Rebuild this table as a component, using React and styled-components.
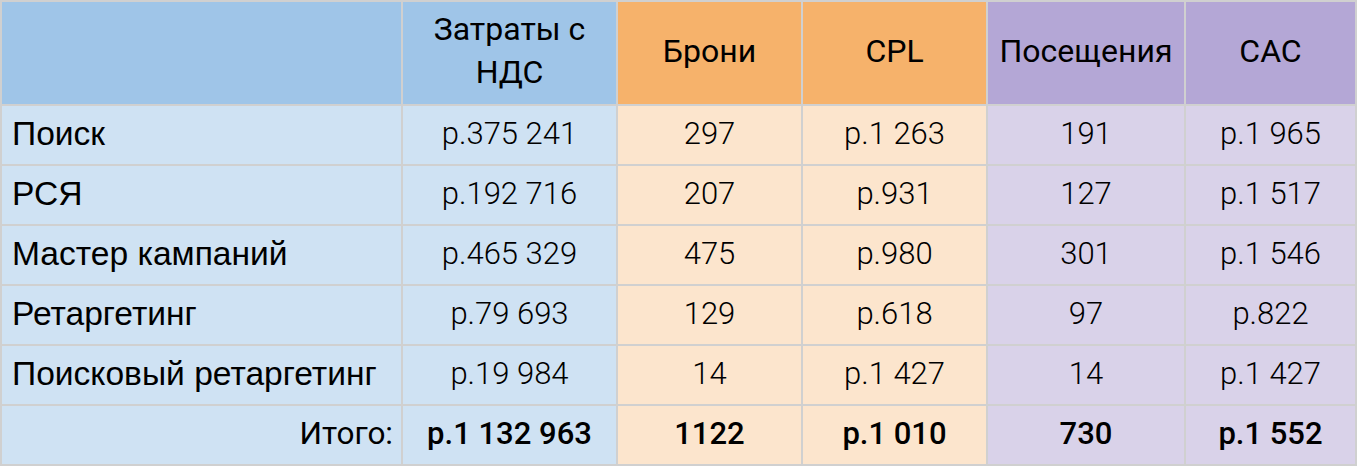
import React from "react";
import styled, { createGlobalStyle } from "styled-components";

const Global = createGlobalStyle`
  html, body { margin: 0; padding: 0; background: #ffffff; }
  body { font-family: "Roboto", "Liberation Sans", sans-serif; color: #000; }
`;

const palette = {
  blue: { head: "#9fc5e8", body: "#cfe2f3" },
  orange: { head: "#f6b26b", body: "#fce5cd" },
  purple: { head: "#b4a7d6", body: "#d9d2e9" },
};

const Table = styled.div`
  display: grid;
  grid-template-columns: 401px 215px 185px 185px 198px 171px;
  grid-template-rows: 104px repeat(6, 60px);
  width: max-content;
  border-left: 2px solid #d0d0d0;
  border-top: 2px solid #d0d0d0;
`;

const Cell = styled.div`
  box-sizing: border-box;
  display: flex;
  align-items: center;
  justify-content: center;
  text-align: center;
  padding-bottom: 4px;
  background: ${(p) => palette[p.$tone].body};
  border-right: 2px solid #d0d0d0;
  border-bottom: 2px solid #d0d0d0;
  font-family: "Roboto", sans-serif;
  font-size: 31px;
  font-weight: 300;
  line-height: 43px;
  white-space: nowrap;
  overflow: hidden;
`;

const HeadCell = styled(Cell)`
  background: ${(p) => palette[p.$tone].head};
  font-size: 32px;
  font-weight: 400;
`;

const LabelCell = styled(Cell)`
  justify-content: flex-start;
  text-align: left;
  padding-left: 10px;
  font-family: "Liberation Sans", Arial, sans-serif;
  font-size: 33.6px;
  font-weight: 400;
`;

const TotalLabelCell = styled(Cell)`
  justify-content: flex-end;
  text-align: right;
  padding-right: 8px;
  font-size: 31.5px;
  font-weight: 400;
`;

const TotalCell = styled(Cell)`
  font-weight: 500;
`;

const tones = ["blue", "blue", "orange", "orange", "purple", "purple"];

const headers = [null, ["Затраты с", "НДС"], "Брони", "CPL", "Посещения", "CAC"];

const rows = [
  ["Поиск", "р.375 241", "297", "р.1 263", "191", "р.1 965"],
  ["РСЯ", "р.192 716", "207", "р.931", "127", "р.1 517"],
  ["Мастер кампаний", "р.465 329", "475", "р.980", "301", "р.1 546"],
  ["Ретаргетинг", "р.79 693", "129", "р.618", "97", "р.822"],
  ["Поисковый ретаргетинг", "р.19 984", "14", "р.1 427", "14", "р.1 427"],
];

const totals = ["Итого:", "р.1 132 963", "1122", "р.1 010", "730", "р.1 552"];

export default function App() {
  return (
    <>
      <Global />
      <Table>
        {headers.map((h, j) => (
          <HeadCell key={`h-${j}`} $tone={tones[j]}>
            {Array.isArray(h) ? (
              <>
                {h[0]}
                <br />
                {h[1]}
              </>
            ) : (
              h
            )}
          </HeadCell>
        ))}
        {rows.map((r, i) =>
          r.map((v, j) =>
            j === 0 ? (
              <LabelCell key={`${i}-${j}`} $tone={tones[j]}>
                {v}
              </LabelCell>
            ) : (
              <Cell key={`${i}-${j}`} $tone={tones[j]}>
                {v}
              </Cell>
            )
          )
        )}
        {totals.map((v, j) =>
          j === 0 ? (
            <TotalLabelCell key={`t-${j}`} $tone={tones[j]}>
              {v}
            </TotalLabelCell>
          ) : (
            <TotalCell key={`t-${j}`} $tone={tones[j]}>
              {v}
            </TotalCell>
          )
        )}
      </Table>
    </>
  );
}
